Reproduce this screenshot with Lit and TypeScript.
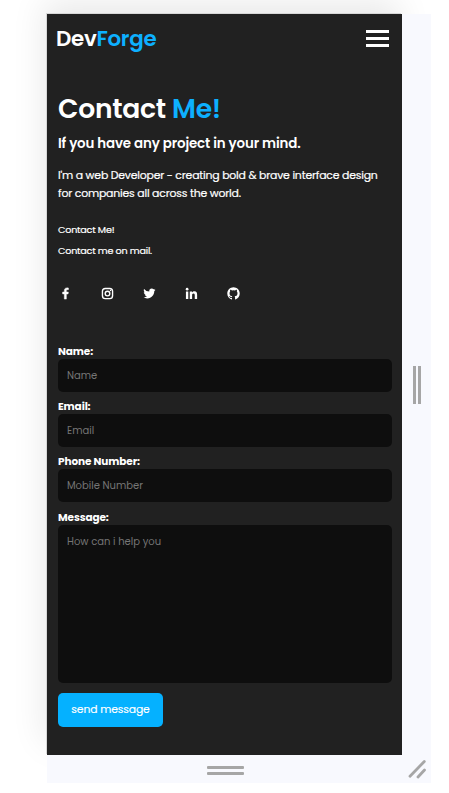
import { LitElement, html, css, svg } from "lit";
import { customElement } from "lit/decorators.js";

const icons = [
  svg`<path d="M13.397 20.997v-8.196h2.765l.411-3.209h-3.176V7.548c0-.926.258-1.56 1.587-1.56h1.684V3.127A22.336 22.336 0 0 0 14.201 3c-2.444 0-4.122 1.492-4.122 4.231v2.355H7.332v3.209h2.753v8.202h3.312z" stroke="#fff" stroke-width=".7"/>`,
  svg`<rect x="3.9" y="3.9" width="16.2" height="16.2" rx="4.6" fill="none" stroke="#fff" stroke-width="2.2"/><circle cx="12" cy="12" r="3.7" fill="none" stroke="#fff" stroke-width="2.2"/><circle cx="16.8" cy="7.2" r="1.1"/>`,
  svg`<path d="M19.633 7.997c.013.175.013.349.013.523 0 5.325-4.053 11.461-11.46 11.461-2.282 0-4.402-.661-6.186-1.809.324.037.636.05.973.05a8.07 8.07 0 0 0 5.001-1.721 4.036 4.036 0 0 1-3.767-2.793c.249.037.499.062.761.062.361 0 .724-.05 1.061-.137a4.027 4.027 0 0 1-3.23-3.953v-.05c.537.299 1.16.486 1.82.511a4.022 4.022 0 0 1-1.796-3.354c0-.748.199-1.434.548-2.032a11.457 11.457 0 0 0 8.306 4.215c-.062-.3-.1-.611-.1-.923a4.026 4.026 0 0 1 4.028-4.028c1.16 0 2.207.486 2.943 1.272a7.957 7.957 0 0 0 2.556-.973 4.02 4.02 0 0 1-1.771 2.22 8.073 8.073 0 0 0 2.319-.624 8.645 8.645 0 0 1-2.019 2.083z"/>`,
  svg`<circle cx="4.983" cy="5.009" r="2.188"/><path d="M9.237 8.855v12.139h3.769v-6.003c0-1.584.298-3.118 2.262-3.118 1.937 0 1.961 1.811 1.961 3.218v5.904H21v-6.657c0-3.27-.704-5.783-4.526-5.783-1.835 0-3.065 1.007-3.568 1.96h-.051v-1.66H9.237zm-6.142 0H6.87v12.139H3.095z"/>`,
  svg`<path d="M12.026 2c-5.509 0-9.974 4.465-9.974 9.974 0 4.406 2.857 8.145 6.821 9.465.499.09.679-.217.679-.481 0-.237-.008-.865-.011-1.696-2.775.602-3.361-1.338-3.361-1.338-.452-1.152-1.107-1.459-1.107-1.459-.905-.619.069-.605.069-.605 1.002.07 1.527 1.028 1.527 1.028.89 1.524 2.336 1.084 2.902.829.091-.645.351-1.085.635-1.334-2.214-.251-4.542-1.107-4.542-4.93 0-1.087.389-1.979 1.024-2.675-.101-.253-.446-1.268.099-2.64 0 0 .837-.269 2.742 1.021a9.582 9.582 0 0 1 2.496-.336 9.554 9.554 0 0 1 2.496.336c1.906-1.291 2.742-1.021 2.742-1.021.545 1.372.203 2.387.099 2.64.64.696 1.024 1.587 1.024 2.675 0 3.833-2.33 4.675-4.552 4.922.355.308.675.916.675 1.846 0 1.334-.012 2.41-.012 2.737 0 .267.178.577.687.479C19.146 20.115 22 16.379 22 11.974 22 6.465 17.535 2 12.026 2z"/>`,
];

@customElement("app-root")
export class AppRoot extends LitElement {
  static styles = css`
    :host { display: block; width: 449px; height: 793px; overflow: hidden; background: #fff; font-family: Poppins, Inter, sans-serif; color: #fff; }
    * { box-sizing: border-box; }
    .device { margin: 14px 0 0 47px; width: 384px; height: 769px; display: grid; grid-template-columns: 355px 29px; grid-template-rows: 741px 28px; }
    .screen { background: #212121; padding: 0 10px 0 11px; box-shadow: -1px -1px 0 #d8d8d8, -3px -12px 32px rgba(0, 0, 0, 0.09); display: flex; flex-direction: column; }
    .side, .bottom, .corner { background: #f8f9fe; display: flex; align-items: center; justify-content: center; position: relative; }
    header { display: flex; justify-content: space-between; height: 50px; padding: 16px 3px 0 0; margin-left: -2px; flex: none; }
    .logo { font-size: 21.4px; font-weight: 600; line-height: 18px; letter-spacing: -0.3px; white-space: nowrap; }
    .accent { color: #0db0ff; }
    .burger { display: flex; flex-direction: column; gap: 4px; }
    .burger i { width: 23px; height: 3px; background: #fff; }
    h1 { margin: 29px 0 0; font-size: 26.6px; font-weight: 600; line-height: 32px; letter-spacing: -0.25px; white-space: nowrap; }
    h2 { margin: 9px 0 0; font-size: 13.4px; font-weight: 600; line-height: 20px; letter-spacing: -0.13px; white-space: nowrap; }
    .lead { margin: 13px 0 0; font-size: 10.9px; font-weight: 400; -webkit-text-stroke: 0.2px #fff; line-height: 18px; letter-spacing: -0.2px; white-space: nowrap; }
    .l1, .l2 { display: block; }
    .link { font-size: 9.6px; font-weight: 400; -webkit-text-stroke: 0.2px #fff; line-height: 21px; letter-spacing: -0.21px; white-space: nowrap; }
    .links { margin-top: 16px; display: flex; flex-direction: column; }
    .social { display: flex; gap: 27px; margin: 25px 0 0 -0.4px; }
    .social svg { width: 15px; height: 15px; fill: #fff; display: block; }
    form { margin-top: 44px; display: flex; flex-direction: column; }
    label { font-size: 10.5px; font-weight: 700; line-height: 13px; height: 14px; letter-spacing: -0.1px; white-space: nowrap; }
    input, textarea { display: block; width: 334px; height: 33px; margin: 0 0 8.2px; padding: 1px 9px 0; border: 0; border-radius: 5px; background: #0e0e0e; font-family: inherit; font-size: 10px; color: #fff; resize: none; outline: 0; }
    textarea { height: 158px; padding: 9px; line-height: 16px; margin-bottom: 10px; }
    ::placeholder { color: #757575; opacity: 1; }
    button { width: 105px; height: 34px; padding: 1px 0 0; border: 0; border-radius: 5px; background: #05b1ff; color: #fff; font-family: inherit; font-size: 10.8px; font-weight: 400; letter-spacing: -0.12px; -webkit-text-stroke: 0.15px #fff; white-space: nowrap; }
    .side { gap: 2px; padding-left: 1px; }
    .side i { width: 3px; height: 38px; background: #a6a6a6; }
    .bottom { flex-direction: column; gap: 3px; padding: 3px 0 0 2px; }
    .bottom i { width: 37px; height: 3px; border-radius: 1px; background: #a6a6a6; }
    .corner svg { display: block; }
  `;

  private field(label: string, hint: string) {
    return html`<label>${label}</label><input placeholder=${hint} />`;
  }

  render() {
    return html`
      <div class="device">
        <main class="screen">
          <header>
            <div class="logo">Dev<span class="accent">Forge</span></div>
            <div class="burger"><i></i><i></i><i></i></div>
          </header>
          <h1>Contact <span class="accent">Me!</span></h1>
          <h2>If you have any project in your mind.</h2>
          <p class="lead">
            <span class="l1">I'm a web Developer - creating bold &amp; brave interface design</span>
            <span class="l2">for companies all across the world.</span>
          </p>
          <div class="links">
            <span class="link">Contact Me!</span>
            <span class="link">Contact me on mail.</span>
          </div>
          <div class="social">${icons.map((i) => html`<svg viewBox="0 0 24 24">${i}</svg>`)}</div>
          <form>
            ${this.field("Name:", "Name")}
            ${this.field("Email:", "Email")}
            ${this.field("Phone Number:", "Mobile Number")}
            <label>Message:</label>
            <textarea placeholder="How can i help you"></textarea>
            <button type="button">send message</button>
          </form>
        </main>
        <div class="side"><i></i><i></i></div>
        <div class="bottom"><i></i><i></i></div>
        <div class="corner">
          <svg width="29" height="28" viewBox="0 0 29 28" fill="none" stroke="#a6a6a6" stroke-width="2.8" stroke-linecap="round">
            <path d="M8 21.2 22.3 6.5M16 22 22.5 15" />
          </svg>
        </div>
      </div>
    `;
  }
}
